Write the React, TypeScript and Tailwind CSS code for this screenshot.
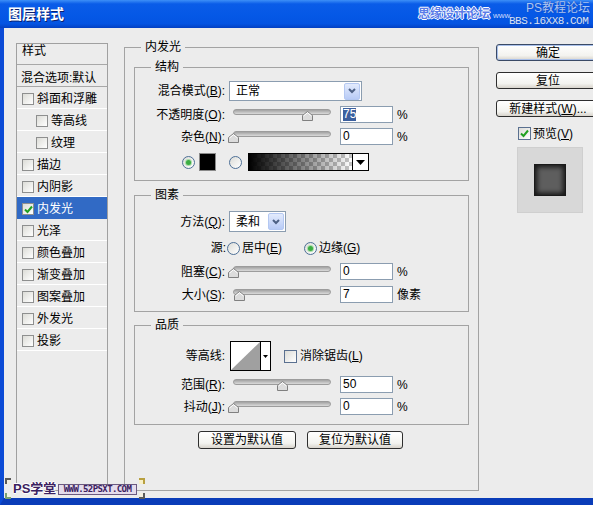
import React from "react";

function Check({ checked = false, list = false }: { checked?: boolean; list?: boolean }) {
  return (
    <span
      className={`flex shrink-0 items-center justify-center border bg-[linear-gradient(135deg,#dcdcd7,#ffffff)] ${
        list ? "h-[12px] w-[12px] border-[#8e8f8f]" : "h-[13px] w-[13px] border-[#5a7090]"
      }`}
    >
      {checked && (
        <svg width="9" height="9" viewBox="0 0 9 9">
          <path d="M1 4.5 L3.5 7 L8 1.5" stroke="#21a121" strokeWidth="2" fill="none" />
        </svg>
      )}
    </span>
  );
}

function Radio({ checked = false }: { checked?: boolean }) {
  return (
    <span className="flex h-[13px] w-[13px] shrink-0 items-center justify-center rounded-full border border-[#4d6f96] bg-[linear-gradient(135deg,#dcdcd7,#ffffff)]">
      {checked && <span className="h-[5px] w-[5px] rounded-full bg-[#3cad43] shadow-[0_0_0_1px_#a8dcaa]" />}
    </span>
  );
}

function Field({ value, sel = false }: { value: string; sel?: boolean }) {
  return (
    <div className="flex h-[17px] w-[53px] shrink-0 items-center border border-[#8b9db0] bg-white pl-[2px] text-[12px] leading-[13px]">
      <span className={sel ? "bg-[#3b5f9e] text-white" : ""}>{value}</span>
    </div>
  );
}

function Slider({ v }: { v: number }) {
  return (
    <div className="relative h-[17px] w-[106px] shrink-0">
      <div className="absolute left-[4px] right-[4px] top-[3px] h-[6px] rounded-full border border-[#9c9c9c] bg-[linear-gradient(to_bottom,#a2a2a2,#dadada)]" />
      <svg className="absolute top-[5px]" style={{ left: 4 + v - 5.5 }} width="11" height="10" viewBox="0 0 11 10">
        <polygon points="5.5,0.5 10.5,4.5 10.5,9.5 0.5,9.5 0.5,4.5" fill="#dcdcdc" stroke="#808080" />
        <polyline points="1.5,5 5.5,1.7 9.5,5" fill="none" stroke="#ffffff" strokeWidth="1" />
      </svg>
    </div>
  );
}

function Sel({ text, wide }: { text: string; wide?: boolean }) {
  return (
    <div
      className={`flex items-center border border-[#8b9db0] bg-white ${
        wide ? "h-[20px] w-[133px]" : "h-[21px] w-[57px]"
      }`}
    >
      <span className="flex-1 pl-[6px] text-[12px] leading-[14px]">{text}</span>
      <span className="mr-[1px] flex h-[17px] w-[16px] items-center justify-center rounded-[2px] border border-[#b4c8f2] bg-[linear-gradient(to_bottom,#e3ebfd,#b8cbf6)]">
        <svg width="8" height="6" viewBox="0 0 8 6">
          <path d="M1 1 L4 4 L7 1" stroke="#4d6185" strokeWidth="2" fill="none" />
        </svg>
      </span>
    </div>
  );
}

function Row({ label, children, className = "" }: { label: React.ReactNode; children: React.ReactNode; className?: string }) {
  return (
    <div className={`flex items-center ${className}`}>
      <div className="w-[91px] shrink-0 pr-[1px] text-right">{label}</div>
      <div className="ml-[3px] flex items-center">{children}</div>
    </div>
  );
}

function Group({ title, className = "", children }: { title: string; className?: string; children: React.ReactNode }) {
  return (
    <div className={`relative flex flex-col border border-[#a3a3a3] ${className}`}>
      <span className="absolute -top-[8px] left-[16px] bg-[#ececec] px-[4px] leading-[14px]">{title}</span>
      {children}
    </div>
  );
}

function Btn({ children, className = "", def = false }: { children: React.ReactNode; className?: string; def?: boolean }) {
  return (
    <div
      className={`flex items-center justify-center rounded-[3px] border bg-[linear-gradient(to_bottom,#ffffff,#f3f3ef_70%,#d8d4cc)] leading-[14px] ${
        def ? "border-[#3a4a66] shadow-[inset_0_0_0_1px_#a9c0ea]" : "border-[#2e2e2e]"
      } ${className}`}
    >
      {children}
    </div>
  );
}

const listItems: { t: string; indent?: boolean; sel?: boolean }[] = [
  { t: "斜面和浮雕" },
  { t: "等高线", indent: true },
  { t: "纹理", indent: true },
  { t: "描边" },
  { t: "内阴影" },
  { t: "内发光", sel: true },
  { t: "光泽" },
  { t: "颜色叠加" },
  { t: "渐变叠加" },
  { t: "图案叠加" },
  { t: "外发光" },
  { t: "投影" },
];

export default function App() {
  return (
    <div className="relative flex h-[505px] w-[593px] flex-col overflow-hidden bg-[#ececec] font-['Liberation_Sans','Noto_Sans_CJK_SC',sans-serif] text-[12px] leading-[14px] text-black">
      {/* Title bar */}
      <div className="relative h-[28px] shrink-0 bg-[linear-gradient(to_bottom,#3d8ff7_0%,#0a5ce8_14%,#0558e6_55%,#0454e2_85%,#0340c2_100%)]">
        <span className="absolute left-[8px] top-[5px] text-[14px] font-bold leading-[18px] text-white [text-shadow:1px_1px_0_#0a1f6e]">
          图层样式
        </span>
        <span className="absolute left-[418px] top-[7px] text-[12px] font-bold leading-[14px] text-[#5a7ce8] [text-shadow:1px_0_0_#fff,-1px_0_0_#fff,0_1px_0_#fff,0_-1px_0_#fff]">
          思缘设计论坛
        </span>
        <span className="absolute left-[493px] top-[11px] text-[8px] leading-[10px] text-[#c9d8fb]">www.</span>
        <span className="absolute left-[526px] top-[1px] text-[12px] leading-[14px] text-[#a9c6f6] [text-shadow:0_0_1px_#1d3c9c]">
          PS教程论坛
        </span>
        <span className="absolute left-[509px] top-[15px] font-['Liberation_Mono',monospace] text-[11px] leading-[12px] tracking-[-0.5px] text-[#d7e4fc] [text-shadow:0_0_1px_#1d3c9c]">
          BBS.16XX8.COM
        </span>
      </div>

      {/* Body */}
      <div className="flex flex-1 border-b-[7px] border-l-4 border-b-[#0a3cb8] border-l-[#0b4bd6]">
        {/* Left list */}
        <div className="ml-[12px] mt-[15px] flex h-[448px] w-[92px] shrink-0 flex-col border border-[#a0a0a0]">
          <div className="h-[21px] border-b border-[#a8a8a8] pl-[5px] pt-[0px]">样式</div>
          <div className="flex h-[22px] items-center border-b border-[#a8a8a8] pl-[4px] pt-[4px] whitespace-nowrap">
            混合选项:默认
          </div>
          {listItems.map((it) => (
            <div
              key={it.t}
              className={`flex h-[22px] items-center border-b pt-[3px] ${
                it.sel ? "border-[#316ac5] bg-[#316ac5] text-white" : "border-white"
              } ${it.indent ? "pl-[19px]" : "pl-[5px]"}`}
            >
              <Check list checked={it.sel} />
              <span className="ml-[3px]">{it.t}</span>
            </div>
          ))}
        </div>

        {/* Main group */}
        <Group title="内发光" className="ml-[16px] mt-[19px] h-[444px] w-[355px] shrink-0 pl-[9px] pt-[19px]">
          <Group title="结构" className="h-[114px] w-[335px] pt-[13px]">
            <Row label={<>混合模式(<u>B</u>):</>} className="h-[20px]">
              <Sel text="正常" wide />
            </Row>
            <Row label={<>不透明度(<u>O</u>):</>} className="mt-[5px] h-[17px]">
              <Slider v={74} />
              <div className="ml-[5px]">
                <Field value="75" sel />
              </div>
              <span className="ml-[4px]">%</span>
            </Row>
            <Row label={<>杂色(<u>N</u>):</>} className="mt-[5px] h-[17px]">
              <Slider v={0} />
              <div className="ml-[5px]">
                <Field value="0" />
              </div>
              <span className="ml-[4px]">%</span>
            </Row>
            <div className="ml-[47px] mt-[8px] flex h-[18px] items-center">
              <Radio checked />
              <span className="ml-[4px] h-[18px] w-[17px] border border-[#8a8a8a] bg-black" />
              <span className="ml-[13px]">
                <Radio />
              </span>
              <span className="ml-[6px] h-[18px] w-[105px] border border-black bg-[linear-gradient(to_right,#000,rgba(0,0,0,0)),repeating-conic-gradient(#c6c6c6_0%_25%,#ffffff_0%_50%)] [background-size:100%_100%,8px_8px]" />
              <span className="flex h-[18px] w-[16px] items-center justify-center border border-l-0 border-black bg-white">
                <svg width="9" height="5" viewBox="0 0 9 5">
                  <polygon points="0,0 9,0 4.5,5" fill="#000" />
                </svg>
              </span>
            </div>
          </Group>

          <Group title="图素" className="mt-[14px] h-[117px] w-[335px] pt-[15px]">
            <Row label={<>方法(<u>Q</u>):</>} className="h-[21px]">
              <Sel text="柔和" />
            </Row>
            <div className="mt-[8px] flex h-[16px] items-center">
              <div className="w-[91px] shrink-0 text-right">源:</div>
              <div className="ml-[1px] flex items-center">
                <Radio />
                <span className="ml-[2px]">
                  居中(<u>E</u>)
                </span>
                <span className="ml-[22px]">
                  <Radio checked />
                </span>
                <span className="ml-[2px]">
                  边缘(<u>G</u>)
                </span>
              </div>
            </div>
            <Row label={<>阻塞(<u>C</u>):</>} className="mt-[7px] h-[17px]">
              <Slider v={0} />
              <div className="ml-[5px]">
                <Field value="0" />
              </div>
              <span className="ml-[4px]">%</span>
            </Row>
            <Row label={<>大小(<u>S</u>):</>} className="mt-[6px] h-[17px]">
              <Slider v={6} />
              <div className="ml-[5px]">
                <Field value="7" />
              </div>
              <span className="ml-[4px]">像素</span>
            </Row>
          </Group>

          <Group title="品质" className="mt-[13px] h-[100px] w-[335px] pt-[15px]">
            <Row label="等高线:" className="h-[30px]">
              <div className="ml-[1px] flex h-[30px] w-[41px] border border-black bg-white">
                <svg width="29" height="28" viewBox="0 0 29 28" className="shrink-0">
                  <polygon points="0,28 29,0 29,28" fill="#a0a0a0" />
                </svg>
                <span className="flex w-[10px] items-center justify-center border-l border-black">
                  <svg width="5" height="3" viewBox="0 0 5 3">
                    <polygon points="0,0 5,0 2.5,3" fill="#000" />
                  </svg>
                </span>
              </div>
              <span className="ml-[13px]">
                <Check />
              </span>
              <span className="ml-[3px]">
                消除锯齿(<u>L</u>)
              </span>
            </Row>
            <Row label={<>范围(<u>R</u>):</>} className="mt-[5px] h-[17px]">
              <Slider v={49} />
              <div className="ml-[5px]">
                <Field value="50" />
              </div>
              <span className="ml-[4px]">%</span>
            </Row>
            <Row label={<>抖动(<u>J</u>):</>} className="mt-[5px] h-[17px]">
              <Slider v={0} />
              <div className="ml-[5px]">
                <Field value="0" />
              </div>
              <span className="ml-[4px]">%</span>
            </Row>
          </Group>

          <div className="ml-[64px] mt-[6px] flex">
            <Btn className="h-[18px] w-[98px]">设置为默认值</Btn>
            <Btn className="ml-[11px] h-[18px] w-[96px]">复位为默认值</Btn>
          </div>
        </Group>

        {/* Right column */}
        <div className="ml-[17px] mt-[16px] flex w-[104px] shrink-0 flex-col">
          <Btn def className="h-[17px] w-[104px]">确定</Btn>
          <Btn className="mt-[11px] h-[17px] w-[104px]">复位</Btn>
          <Btn className="mt-[11px] h-[17px] w-[104px] whitespace-nowrap">
            新建样式(<u>W</u>)...
          </Btn>
          <div className="ml-[22px] mt-[10px] flex h-[13px] items-center">
            <Check checked />
            <span className="ml-[2px]">
              预览(<u>V</u>)
            </span>
          </div>
          <div className="ml-[21px] mt-[7px] flex h-[66px] w-[66px] items-center justify-center border border-[#cfcfcf] bg-[#d8d8d8]">
            <div className="h-[32px] w-[32px] border border-[#1a1a1a] bg-[#5e5e5e] shadow-[inset_0_0_5px_2px_#151515]" />
          </div>
        </div>
      </div>

      {/* Bottom-left watermark */}
      <span className="absolute left-[5px] top-[478px] h-[6px] w-[6px] border-l-2 border-t-2 border-[#5a5a5a] bg-[#f4efe0]" />
      <span className="absolute left-[5px] top-[493px] h-[6px] w-[6px] border-b-2 border-l-2 border-[#7aa070] bg-[#eef4e4]" />
      <span className="absolute left-[139px] top-[478px] h-[6px] w-[6px] border-r-2 border-t-2 border-[#b8a040] bg-[#f8f0c8]" />
      <span className="absolute left-[139px] top-[493px] h-[6px] w-[6px] border-b-2 border-r-2 border-[#5a5a5a] bg-[#f4efe0]" />
      <span className="absolute left-[13px] top-[482px] text-[13px] font-bold leading-[14px] text-[#3b2160] [text-shadow:1px_0_0_#fff,-1px_0_0_#fff,0_1px_0_#fff,0_-1px_0_#fff]">
        PS学堂
      </span>
      <span className="absolute left-[58px] top-[484px] w-[79px] border border-[#6b5a80] bg-[#e4dcec] text-center font-['DejaVu_Sans_Mono',monospace] text-[9px] font-bold leading-[9px] tracking-[-0.6px] text-[#3b2160]">
        WWW.52PSXT.COM
      </span>
    </div>
  );
}
